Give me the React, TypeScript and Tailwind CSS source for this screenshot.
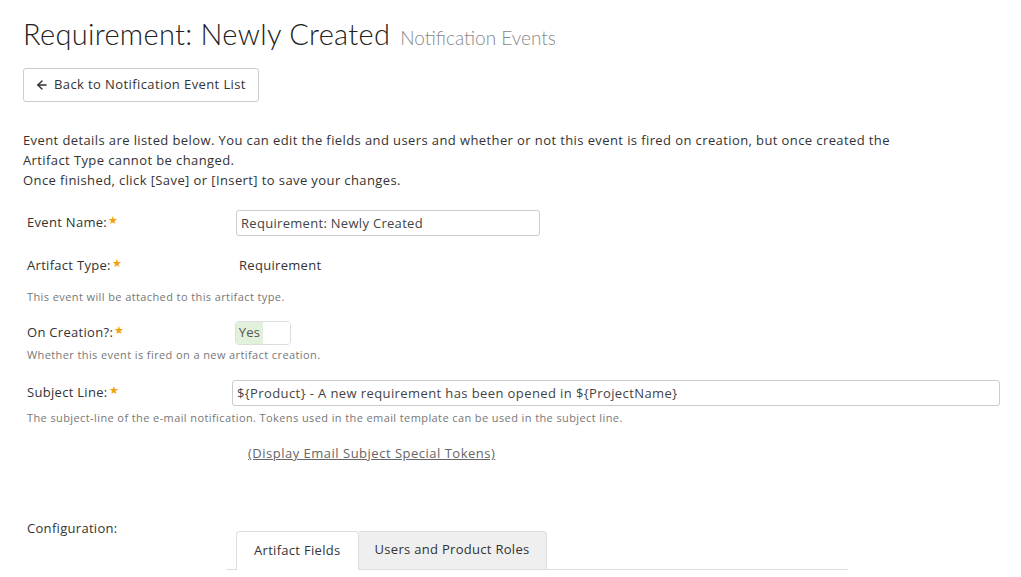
import { ArrowLeft } from "lucide-react";

function Req() {
  return <sup className="text-[#f0a30a] text-[11px] relative -top-[3px] ml-[1px]">★</sup>;
}

export default function App() {
  return (
    <div className="min-h-screen bg-white text-[#333] text-[13px] pl-[23px] pr-[21px] font-['Open_Sans',sans-serif]">
      {/* heading */}
      <h1 className="pt-[15px] flex items-baseline gap-[10px] leading-[38px]">
        <span className="text-[29px] font-light text-[#222] font-['Lato',sans-serif] tracking-[0.3px]">Requirement: Newly Created</span>
        <span className="text-[19px] font-light text-[#888] font-['Lato',sans-serif]">Notification Events</span>
      </h1>

      <button className="mt-[11px] h-[34px] w-[236px] border border-[#ccc] rounded-[3px] flex items-center gap-[5px] px-[11px] text-[13px] text-[#333] tracking-[0.4px]">
        <ArrowLeft size={14} strokeWidth={2.5} />
        Back to Notification Event List
      </button>

      <div className="mt-[28px] leading-[20px] max-w-[885px] tracking-[0.4px]">
        <p>Event details are listed below. You can edit the fields and users and whether or not this event is fired on creation, but once created the Artifact Type cannot be changed.</p>
        <p>Once finished, click [Save] or [Insert] to save your changes.</p>
      </div>

      {/* form */}
      <div className="mt-[20px] tracking-[0.3px]">
        <div className="flex items-center h-[26px]">
          <div className="w-[213px] pl-[4px] text-[13px]">Event Name:<Req /></div>
          <input
            readOnly
            value="Requirement: Newly Created"
            className="w-[304px] h-[26px] border border-[#ccc] rounded-[3px] px-[4px] text-[13px] text-[#444] outline-none tracking-[0.3px]"
          />
        </div>

        <div className="flex items-center h-[26px] mt-[17px]">
          <div className="w-[213px] pl-[4px]">Artifact Type:<Req /></div>
          <div className="pl-[3px]">Requirement</div>
        </div>
        <p className="mt-[11px] pl-[4px] text-[11px] text-[#777] leading-[14px] tracking-[0.4px]">This event will be attached to this artifact type.</p>

        <div className="flex items-center h-[24px] mt-[17px]">
          <div className="w-[212px] pl-[4px]">On Creation?:<Req /></div>
          <div className="w-[56px] h-[24px] border border-[#ddd] rounded-[4px] flex overflow-hidden">
            <span className="w-[27px] bg-[#e2f1dc] text-[#555] flex items-center justify-center">Yes</span>
            <span className="flex-1 bg-white" />
          </div>
        </div>
        <p className="mt-[3px] pl-[4px] text-[11px] text-[#777] leading-[14px] tracking-[0.4px]">Whether this event is fired on a new artifact creation.</p>

        <div className="flex items-center h-[26px] mt-[18px]">
          <div className="w-[209px] pl-[4px]">Subject Line:<Req /></div>
          <input
            readOnly
            value="${Product} - A new requirement has been opened in ${ProjectName}"
            className="flex-1 h-[26px] border border-[#ccc] rounded-[3px] px-[4px] text-[13px] text-[#444] outline-none tracking-[0.4px]"
          />
        </div>
        <p className="mt-[5px] pl-[4px] text-[11px] text-[#777] leading-[14px] tracking-[0.4px]">
          The subject-line of the e-mail notification. Tokens used in the email template can be used in the subject line.
        </p>

        <div className="mt-[19px] pl-[225px] tracking-[0.5px]">
          <a className="underline text-[#666] cursor-pointer">(Display Email Subject Special Tokens)</a>
        </div>

        <div className="mt-[54px] pl-[4px] h-[20px] leading-[20px]">Configuration:</div>

        <div className="ml-[203px] w-[622px] -mt-[7px] flex border-b border-[#ddd]">
          <div className="ml-[10px] flex -mb-px">
            <div className="h-[39px] px-[17px] flex items-center bg-white border border-b-0 border-[#ddd] rounded-t-[4px]">Artifact Fields</div>
            <div className="h-[39px] px-[16px] flex items-center bg-[#efefef] border border-[#ddd] border-l-0 rounded-tr-[4px]">Users and Product Roles</div>
          </div>
        </div>
      </div>
    </div>
  );
}
